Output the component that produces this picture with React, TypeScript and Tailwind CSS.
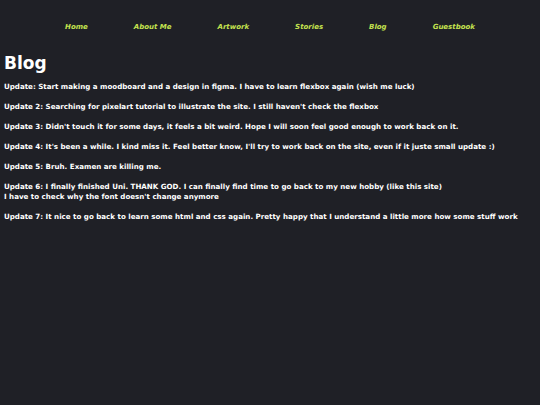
const links = ["Home", "About Me", "Artwork", "Stories", "Blog", "Guestbook"];

const updates: string[][] = [
  ["Update: Start making a moodboard and a design in figma. I have to learn flexbox again (wish me luck)"],
  ["Update 2: Searching for pixelart tutorial to illustrate the site. I still haven't check the flexbox"],
  ["Update 3: Didn't touch it for some days, it feels a bit weird. Hope I will soon feel good enough to work back on it."],
  ["Update 4: It's been a while. I kind miss it. Feel better know, I'll try to work back on the site, even if it juste small update :)"],
  ["Update 5: Bruh. Examen are killing me."],
  [
    "Update 6: I finally finished Uni. THANK GOD. I can finally find time to go back to my new hobby (like this site)",
    "I have to check why the font doesn't change anymore",
  ],
  ["Update 7: It nice to go back to learn some html and css again. Pretty happy that I understand a little more how some stuff work"],
];

export default function App() {
  return (
    <div className="min-h-[405px] bg-[#1f2026] text-white font-['DejaVu_Sans',sans-serif]">
      {/* nav */}
      <nav className="flex justify-center gap-[46px] pt-[21px]">
        {links.map((l) => (
          <a key={l} className="text-[7px] font-bold italic text-[#c5e34f] leading-[12px]">
            {l}
          </a>
        ))}
      </nav>

      <main className="px-[4px]">
        <h1 className="mt-[20px] text-[17px] font-bold leading-[20px]">Blog</h1>
        <div className="mt-[9px] space-y-[10px]">
          {updates.map((u, i) => (
            <p key={i} className="text-[7.1px] font-bold leading-[10px]">
              {u.map((line, j) => (
                <span key={j} className="block">{line}</span>
              ))}
            </p>
          ))}
        </div>
      </main>
    </div>
  );
}
